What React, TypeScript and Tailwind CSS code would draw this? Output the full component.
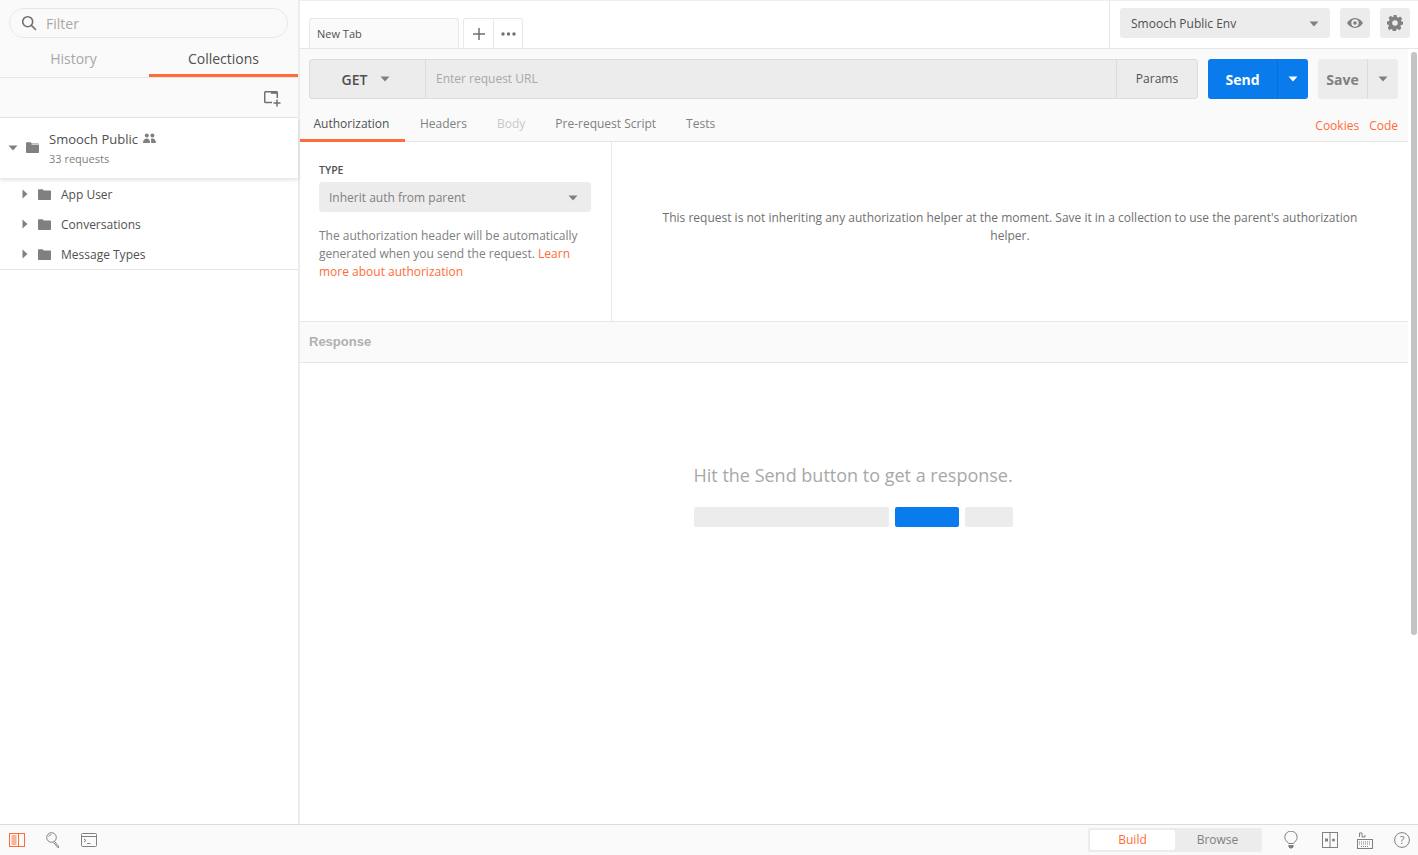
import React from "react";

const Caret = ({ className = "" }: { className?: string }) => (
  <svg width="10" height="6" viewBox="0 0 10 6" className={className}>
    <path d="M0.5 0.5h9L5 5.5z" fill="currentColor" />
  </svg>
);
const CaretRight = () => (
  <svg width="6" height="10" viewBox="0 0 6 10" className="text-[#808080]">
    <path d="M0.5 0.5v9L5.5 5z" fill="currentColor" />
  </svg>
);
const Folder = ({ open = false }: { open?: boolean }) => (
  <svg width="13" height="11" viewBox="0 0 13 11" className="text-[#808080]">
    <path d="M0 1.2C0 .6.4.2 1 .2h3.6l1.2 1.3H12c.6 0 1 .4 1 1V10c0 .6-.4 1-1 1H1c-.6 0-1-.4-1-1z" fill="currentColor" />
    {open && <path d="M5.5 2.2H13v.6H5.5z" fill="#fff" />}
  </svg>
);

const FolderRow = ({ name }: { name: string }) => (
  <div className="h-[30px] flex items-center pl-[22px] text-[12px] text-[#505050]">
    <CaretRight />
    <span className="ml-[10px]"><Folder /></span>
    <span className="ml-[10px] pt-[2px]">{name}</span>
  </div>
);

const Sidebar = () => (
  <aside className="w-[300px] shrink-0 h-full border-r-2 border-[#ececec] bg-white flex flex-col">
    <div className="bg-[#fafafa]">
      <div className="pt-[8px] pl-[9px] pr-[10px]">
        <div className="h-[30px] rounded-full border border-[#e8e8e8] flex items-center pl-[11px]">
          <svg width="16" height="16" viewBox="0 0 16 16" fill="none" stroke="#707070" strokeWidth="1.6">
            <circle cx="6.7" cy="6.7" r="5" />
            <path d="M10.4 10.4 14.5 14.5" strokeLinecap="round" />
          </svg>
          <span className="ml-[9px] text-[14px] text-[#a8a8a8]">Filter</span>
        </div>
      </div>
      <div className="flex h-[40px] border-b border-[#e6e6e6] text-[14px]">
        <div className="w-[149px] flex items-center justify-center pt-[1px] pr-[2px] text-[#a8a8a8]">History</div>
        <div className="flex-1 flex items-center justify-center pt-[4px] text-[#505050] border-b-[3px] border-[#ff6c37]">Collections</div>
      </div>
      <div className="h-[40px] border-b border-[#e6e6e6] flex items-center justify-end pr-[17px] pt-[2px]">
        <svg width="17" height="16" viewBox="0 0 17 16" fill="none" stroke="#707070" strokeWidth="1.5">
          <path d="M8 11.5H1.7a1 1 0 0 1-1-1V1.7a1 1 0 0 1 1-1h10.6a1 1 0 0 1 1 1V7" />
          <path d="M7 1.8h6" strokeWidth="2" />
          <path d="M13 8.5v7M9.5 12h7" />
        </svg>
      </div>
    </div>
    <div className="relative h-[60px] bg-white flex items-center pl-[8px] shadow-[0_2px_4px_rgba(0,0,0,0.12)]">
      <Caret className="text-[#808080]" />
      <span className="ml-[8px] -mt-[2px]"><Folder open /></span>
      <div className="ml-[10px] -mt-[2px]">
        <div className="flex items-center text-[13px] leading-[20px] text-[#505050]">
          Smooch Public
          <svg width="13" height="11" viewBox="0 0 13 11" className="ml-[5px] text-[#808080]" fill="currentColor">
            <circle cx="3.8" cy="2.4" r="2" />
            <circle cx="9.4" cy="2.4" r="2" />
            <path d="M0 10c0-3 1.500-4.500 3.800-4.500S7 7 7 10zM8 5.700c2.800-.9 5 .9 5 4.300H8.200c0-1.500-.2-3.200-.2-4.300z" />
          </svg>
        </div>
        <div className="text-[11px] leading-[15px] mt-[2px] text-[#808080]">33 requests</div>
      </div>
    </div>
    <div className="pt-[1px] border-b border-[#e6e6e6]">
      <FolderRow name="App User" />
      <FolderRow name="Conversations" />
      <FolderRow name="Message Types" />
    </div>
  </aside>
);

const TopBar = () => (
  <div className="h-[49px] shrink-0 border-b border-[#e6e6e6] border-t-[1px] border-t-[#eeeeee] flex bg-white">
    <div className="flex-1 flex items-end pl-[9px]">
      <div className="w-[150px] h-[30px] bg-[#fafafa] border border-b-0 border-[#e8e8e8] rounded-t-[3px] flex items-center pl-[7px] pt-[1px] text-[11px] text-[#505050]">New Tab</div>
      <div className="ml-[4px] h-[30px] flex border border-b-0 border-[#e8e8e8] rounded-t-[3px]">
        <div className="w-[30px] flex items-center justify-center border-r border-[#e8e8e8]">
          <svg width="12" height="12" viewBox="0 0 12 12" stroke="#707070" strokeWidth="1.5"><path d="M6 0v12M0 6h12" /></svg>
        </div>
        <div className="w-[28px] flex items-center justify-center">
          <svg width="15" height="4" viewBox="0 0 15 4" fill="#707070"><circle cx="2" cy="2" r="1.700" /><circle cx="7.500" cy="2" r="1.700" /><circle cx="13" cy="2" r="1.700" /></svg>
        </div>
      </div>
    </div>
    <div className="w-[309px] border-l border-[#e8e8e8] flex items-start pt-[7px] pl-[10px]">
      <div className="w-[210px] h-[30px] bg-[#ececec] rounded-[3px] flex items-center justify-between pl-[11px] pr-[11px] pt-[2px] text-[12px] text-[#505050]">
        Smooch Public Env
        <Caret className="text-[#808080]" />
      </div>
      <div className="ml-[10px] w-[30px] h-[30px] bg-[#ececec] rounded-[3px] flex items-center justify-center">
        <svg width="16" height="10" viewBox="0 0 16 10" fill="#808080">
          <path fillRule="evenodd" d="M8 0c3.500 0 6.300 2.300 8 5-1.700 2.700-4.500 5-8 5S1.700 7.700 0 5c1.700-2.700 4.500-5 8-5zm0 1.300a3.700 3.700 0 1 0 0 7.400 3.700 3.700 0 0 0 0-7.400zM8 3.200a1.800 1.800 0 1 1 0 3.600 1.800 1.800 0 0 1 0-3.600z" />
        </svg>
      </div>
      <div className="ml-[10px] w-[30px] h-[30px] bg-[#ececec] rounded-[3px] flex items-center justify-center">
        <svg width="16" height="16" viewBox="0 0 16 16" fill="#808080">
          <path fillRule="evenodd" d="M6.500 0h3l.4 2.100 1.400.6L13.100 1.500l2.100 2.100-1.200 1.800.6 1.400L16 6.500v3l-2.100.4-.6 1.400 1.200 1.800-2.100 2.100-1.800-1.200-1.400.6-.4 2.100h-3l-.4-2.100-1.400-.6-1.800 1.200L.8 12.700 2 10.900l-.6-1.400L0 9.500v-3l2.100-.4.6-1.400L1.500 2.900 3.600.8l1.800 1.200 1.400-.6zM8 5.200a2.800 2.800 0 1 0 0 5.600 2.800 2.800 0 0 0 0-5.600z" />
        </svg>
      </div>
    </div>
  </div>
);

const UrlBar = () => (
  <div className="flex pt-[10px] pl-[9px] pr-[10px] h-[51px]">
    <div className="flex-1 h-[40px] flex bg-[#ececec] border border-[#dcdcdc] rounded-[3px]">
      <div className="w-[116px] flex items-center justify-center pr-[3px] border-r border-[#dcdcdc] text-[14px] font-semibold text-[#505050]">
        GET
        <Caret className="ml-[13px] text-[#808080]" />
      </div>
      <div className="flex-1 flex items-center pl-[10px] text-[12px] text-[#a8a8a8] pb-[1px]">Enter request URL</div>
      <div className="w-[81px] flex items-center justify-center border-l border-[#dcdcdc] text-[12px] text-[#505050]">Params</div>
    </div>
    <div className="ml-[10px] w-[100px] h-[40px] flex bg-[#097bed] rounded-[3px] text-white">
      <div className="w-[69px] flex items-center justify-center text-[14px] font-bold">Send</div>
      <div className="flex-1 flex items-center justify-center border-l border-[#0a6fd4]"><Caret /></div>
    </div>
    <div className="ml-[10px] w-[80px] h-[40px] flex bg-[#ececec] rounded-[3px]">
      <div className="w-[49px] flex items-center justify-center text-[14px] font-bold text-[#808080]">Save</div>
      <div className="flex-1 flex items-center justify-center border-l border-[#dcdcdc]"><Caret className="text-[#808080]" /></div>
    </div>
  </div>
);

const ReqTabs = () => (
  <div className="h-[42px] flex border-b border-[#e6e6e6] text-[12px]">
    <div className="w-[105px] h-[42px] flex items-center justify-center pt-[9px] pr-[2px] text-[#505050] border-b-[3px] border-[#ff6c37]">Authorization</div>
    <div className="ml-[15px] flex items-center pt-[7px] text-[#808080]">Headers</div>
    <div className="ml-[30px] flex items-center pt-[7px] text-[#c8c8c8]">Body</div>
    <div className="ml-[30px] flex items-center pt-[7px] text-[#808080]">Pre-request Script</div>
    <div className="ml-[30px] flex items-center pt-[7px] text-[#808080]">Tests</div>
    <div className="ml-auto pr-[10px] flex items-center pt-[11px] text-[#ff6c37]">
      <span>Cookies</span><span className="ml-[10px]">Code</span>
    </div>
  </div>
);

const AuthPane = () => (
  <div className="h-[180px] shrink-0 flex bg-white border-b border-[#e6e6e6]">
    <div className="w-[312px] shrink-0 border-r border-[#e6e6e6] pl-[19px] pr-[20px] pt-[21px]">
      <div className="text-[10.5px] leading-[14px] font-semibold text-[#505050]">TYPE</div>
      <div className="mt-[5px] w-[272px] h-[30px] bg-[#ececec] rounded-[3px] flex items-center justify-between pl-[10px] pr-[13px] pt-[2px] text-[12px] text-[#808080]">
        Inherit auth from parent
        <Caret className="text-[#808080]" />
      </div>
      <p className="mt-[15px] w-[272px] text-[12px] leading-[18px] text-[#808080]">
        The authorization header will be automatically generated when you send the request. <span className="text-[#ff6c37]">Learn more about authorization</span>
      </p>
    </div>
    <div className="flex-1 flex justify-center pt-[67px] text-center text-[12px] leading-[18px] text-[#707070]">
      <p className="w-[720px]">This request is not inheriting any authorization helper at the moment. Save it in a collection to use the parent's authorization helper.</p>
    </div>
  </div>
);

const Response = () => (
  <div className="flex-1 flex flex-col bg-white">
    <div className="h-[41px] shrink-0 bg-[#fafafa] border-b border-[#e6e6e6] flex items-center pl-[9px] font-['Liberation_Sans',sans-serif] text-[13px] font-bold text-[#b0b0b0]">
      Response
    </div>
    <div className="flex-1 flex justify-center pt-[100px] pr-[2px]">
      <div className="w-[319px]">
        <div className="text-[18px] leading-[24px] text-[#a8a8a8] whitespace-nowrap">Hit the Send button to get a response.</div>
        <div className="mt-[20px] flex gap-[6px] h-[20px]">
          <div className="w-[195px] bg-[#ececec] rounded-[2px]" />
          <div className="w-[64px] bg-[#097bed] rounded-[2px]" />
          <div className="w-[48px] bg-[#ececec] rounded-[2px]" />
        </div>
      </div>
    </div>
  </div>
);

const StatusBar = () => (
  <div className="h-[31px] shrink-0 border-t border-[#dcdcdc] bg-[#fafafa] flex items-center pl-[9px] pr-[8px]">
    <svg width="16" height="14" viewBox="0 0 16 14" fill="none" stroke="#ff6c37" strokeWidth="1">
      <rect x=".5" y=".5" width="15" height="13" />
      <path d="M9.500 .5v13M2.500 3h5M2.500 5h5M2.500 7h5M2.500 9h5M2.500 11h5" />
    </svg>
    <svg width="14" height="16" viewBox="0 0 14 16" fill="none" stroke="#808080" strokeWidth="1" className="ml-[21px]">
      <circle cx="5.500" cy="5.500" r="4.800" />
      <path d="M2.500 4.500c.5-1 1.500-1.600 3-1.600" />
      <path d="M8.500 9.500l4.500 5.500-1 .8L7.500 10.500" />
    </svg>
    <svg width="16" height="14" viewBox="0 0 16 14" fill="none" stroke="#808080" strokeWidth="1" className="ml-[21px]">
      <rect x=".5" y=".5" width="15" height="13" rx="1" />
      <path d="M.5 3.500h15M3 6l2 1.500L3 9M6 10.500h3.500" />
    </svg>
    <div className="ml-auto w-[174px] h-[24px] bg-[#ececec] rounded-[3px] p-[2px] flex text-[12px]">
      <div className="w-[85px] bg-white rounded-[2px] flex items-center justify-center text-[#ff6c37]">Build</div>
      <div className="flex-1 flex items-center justify-center text-[#808080]">Browse</div>
    </div>
    <svg width="14" height="18" viewBox="0 0 14 18" fill="none" stroke="#808080" strokeWidth="1" className="ml-[22px]">
      <path d="M4.500 12.500C3.500 10.500.8 9.500.8 6.300a6.200 6.200 0 0 1 12.400 0c0 3.200-2.700 4.200-3.700 6.200z" />
      <path d="M4.800 14.500h4.400v1.200L8 17H6l-1.200-1.300z" fill="#808080" />
    </svg>
    <svg width="16" height="16" viewBox="0 0 16 16" fill="none" stroke="#808080" strokeWidth="1" className="ml-[24px]">
      <rect x=".5" y=".5" width="15" height="15" />
      <path d="M8 .5v15" />
      <path d="M3 6.500h3v3H3z" fill="#808080" stroke="none" />
      <circle cx="11.500" cy="8" r="1.500" fill="#808080" stroke="none" />
    </svg>
    <svg width="16" height="17" viewBox="0 0 16 17" fill="none" stroke="#808080" strokeWidth="1" className="ml-[19px]">
      <rect x=".5" y="7.500" width="15" height="9" />
      <path d="M2.500 5V1h2.500v4h3V3" />
      <path d="M2 10h12M2 12h12M4 14.500h8" strokeDasharray="1 1" />
    </svg>
    <svg width="16" height="16" viewBox="0 0 16 16" className="ml-[21px]">
      <circle cx="8" cy="8" r="7.400" fill="none" stroke="#808080" strokeWidth="1" />
      <text x="8" y="12" textAnchor="middle" fontSize="11" fill="#808080" fontFamily="Open Sans">?</text>
    </svg>
  </div>
);

export default function App() {
  return (
    <div className="w-[1418px] h-[855px] overflow-hidden flex flex-col bg-white font-['Open_Sans',sans-serif]">
      <div className="flex-1 min-h-0 flex">
        <Sidebar />
        <main className="flex-1 min-w-0 flex flex-col">
          <TopBar />
          <div className="flex-1 min-h-0 flex">
            <div className="flex-1 min-w-0 flex flex-col">
              <div className="bg-[#fafafa]">
                <UrlBar />
                <ReqTabs />
              </div>
              <AuthPane />
              <Response />
            </div>
            <div className="w-[10px] shrink-0 pl-[3px] pr-px pt-[3px] bg-white">
              <div className="h-[583px] rounded-full bg-[#c4c4c4]" />
            </div>
          </div>
        </main>
      </div>
      <StatusBar />
    </div>
  );
}
